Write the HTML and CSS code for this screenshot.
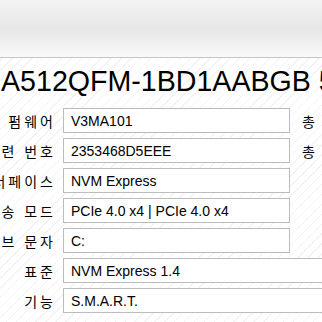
FILE: index.html
```html
<!DOCTYPE html>
<html lang="ko">
<head>
  <meta charset="UTF-8">
  <meta name="viewport" content="width=device-width, initial-scale=1.0">
  <title>디스크 정보</title>
  <link rel="stylesheet" href="styles.css">
</head>
<body>
  <div class="window">
    <div class="toolbar"></div>

    <div class="model">A512QFM-1BD1AABGB 512.1 GB</div>

    <div class="info-grid">
      <div class="label">펌웨어</div>
      <div class="value">V3MA101</div>
      <div class="side">총 읽기</div>

      <div class="label">일련 번호</div>
      <div class="value">2353468D5EEE</div>
      <div class="side">총 쓰기</div>

      <div class="label">인터페이스</div>
      <div class="value">NVM Express</div>
      <div class="side"></div>

      <div class="label">전송 모드</div>
      <div class="value">PCIe 4.0 x4 | PCIe 4.0 x4</div>
      <div class="side"></div>

      <div class="label">드라이브 문자</div>
      <div class="value">C:</div>
      <div class="side"></div>

      <div class="label">표준</div>
      <div class="value wide">NVM Express 1.4</div>

      <div class="label">기능</div>
      <div class="value wide">S.M.A.R.T.</div>
    </div>
  </div>
</body>
</html>
```

FILE: styles.css
```css
body {
  margin: 0;
  font-family: "Liberation Sans", "Noto Sans CJK KR", sans-serif;
  color: #000;
  overflow: hidden;
}

.window {
  width: 322px;
  height: 322px;
  overflow: hidden;
  background-color: #fff;
  background-image: repeating-linear-gradient(-45deg, #fff 0px, #fff 6px, #f3f3f3 6px, #f3f3f3 7px);
}

.toolbar {
  height: 57px;
  background: linear-gradient(#f4f4f4, #e6e6e6 50%, #f9f9f9);
  border-bottom: 1px solid #c6c6c6;
}

.model {
  margin-top: 5px;
  height: 36px;
  line-height: 36px;
  padding-left: 1px;
  font-size: 28.6px;
  white-space: nowrap;
  overflow: hidden;
}

.info-grid {
  display: grid;
  grid-template-columns: 56px 227px 1fr;
  grid-auto-rows: 25px;
  column-gap: 7px;
  row-gap: 5px;
  margin-top: 9px;
}

.label {
  display: flex;
  justify-content: flex-end;
  align-items: center;
  overflow: hidden;
  white-space: nowrap;
  font-family: "Noto Sans CJK KR", sans-serif;
  font-size: 14px;
  letter-spacing: 3px;
}

.value {
  display: flex;
  align-items: center;
  padding-left: 7px;
  border: 1px solid #bcbcbc;
  background-color: #fff;
  font-size: 14px;
  white-space: nowrap;
  overflow: hidden;
}

.value.wide {
  grid-column: 2 / 4;
  width: 320px;
}

.side {
  display: flex;
  align-items: center;
  padding-left: 5px;
  white-space: nowrap;
  overflow: hidden;
  font-family: "Noto Sans CJK KR", sans-serif;
  font-size: 14px;
  letter-spacing: 6px;
}
```
